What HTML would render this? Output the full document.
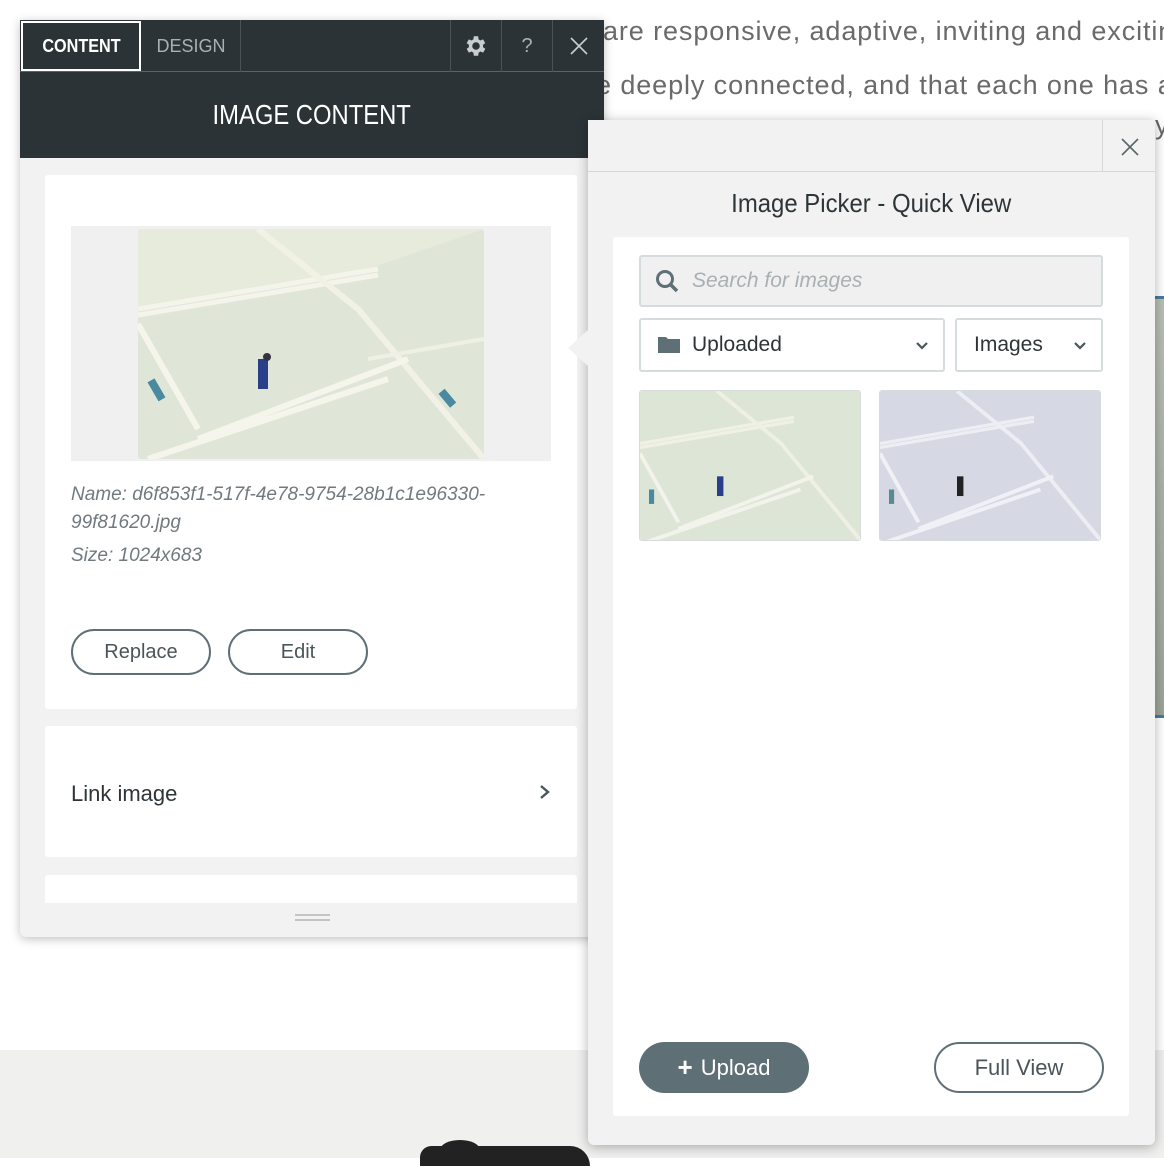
<!DOCTYPE html>
<html><head><meta charset="utf-8"><style>
*{box-sizing:border-box;margin:0;padding:0}
body{width:1164px;height:1158px;overflow:hidden;position:relative;background:#fff;font-family:"Liberation Sans",sans-serif}
.abs{position:absolute}
.bgtext{position:absolute;left:603px;font-size:27px;color:#6a6a6a;white-space:nowrap;letter-spacing:.9px}
.dark{background:#2c3337}
.tab{position:absolute;top:0;height:52px;display:flex;align-items:center;justify-content:center;font-size:18px;color:#fff;border-right:1px solid #4a5256}
.card{position:absolute;background:#fff;border-radius:3px}
.pill{position:absolute;border:2px solid #5f6f76;border-radius:24px;display:flex;align-items:center;justify-content:center;font-size:20px;color:#4a5559;background:#fff}
.img{position:absolute;overflow:hidden}
</style></head><body>
<div class="bgtext" style="top:16px">are responsive, adaptive, inviting and exciting</div>
<div class="bgtext" style="top:70px;left:596px">e deeply connected, and that each one has a</div>
<div class="abs" style="left:1155px;top:110px;font-size:27px;color:#6a6a6a">y</div>
<div class="abs" style="left:1155px;top:296px;width:9px;height:422px;background:linear-gradient(#b9bfb3,#9ca597);border-top:3px solid #4a7aa0;border-bottom:3px solid #4a7aa0"></div>
<div class="abs" style="left:0;top:1050px;width:1164px;height:108px;background:#f0f0ef"></div>
<div class="abs" style="left:420px;top:1146px;width:170px;height:20px;background:#222;border-radius:40px 70px 0 0"></div>
<div class="abs" style="left:440px;top:1140px;width:40px;height:20px;background:#222;border-radius:50% 50% 0 0"></div>

<!-- Left panel -->
<div class="abs" style="left:20px;top:20px;width:584px;height:917px;background:#f2f2f2;box-shadow:0 2px 10px rgba(0,0,0,.25);border-radius:0 0 6px 6px"></div>
<div class="abs dark" style="left:20px;top:20px;width:584px;height:52px;border-bottom:1px solid #59636a">
 <div class="tab" style="left:1px;top:1px;width:120px;height:50px;border:2px solid #fff;font-size:18px;font-weight:bold"><span style="display:inline-block;transform:scaleX(.9)">CONTENT</span></div>
 <div class="tab" style="left:122px;width:99px;color:#a9b0b4">DESIGN</div>
 <div class="tab" style="left:221px;width:210px"></div>
 <div class="tab" style="left:431px;width:51px">
  <svg width="26" height="26" viewBox="0 0 24 24"><path fill="#c9cdd0" d="M19.4 13a7.5 7.5 0 0 0 0-2l2.1-1.6-2-3.5-2.5 1a7 7 0 0 0-1.7-1L15 3h-4l-.4 2.9a7 7 0 0 0-1.7 1l-2.5-1-2 3.5L6.5 11a7.5 7.5 0 0 0 0 2l-2.1 1.6 2 3.5 2.5-1a7 7 0 0 0 1.7 1L11 21h4l.4-2.9a7 7 0 0 0 1.7-1l2.5 1 2-3.5zM13 15.5a3.5 3.5 0 1 1 0-7 3.5 3.5 0 0 1 0 7z" transform="translate(-1 0)"/></svg>
 </div>
 <div class="tab" style="left:482px;width:51px;color:#a9b0b4;font-size:20px">?</div>
 <div class="tab" style="left:533px;width:51px;border:none"><svg width="20" height="20"><path d="M2 2L18 18M18 2L2 18" stroke="#c9cdd0" stroke-width="1.6"/></svg></div>
</div>
<div class="abs dark" style="left:20px;top:72px;width:584px;height:86px;display:flex;align-items:center;justify-content:center;color:#fff;font-size:28px;transform-origin:center"><span style="display:inline-block;transform:scaleX(.85)">IMAGE CONTENT</span></div>

<div class="card" style="left:45px;top:175px;width:532px;height:534px">
 <div class="abs" style="left:26px;top:51px;width:480px;height:235px;background:#f0f0f0"></div>
 <div class="img" style="left:93px;top:54px;width:346px;height:230px;border-radius:3px">
  <svg width="346" height="230" viewBox="0 0 346 230"><rect width="346" height="230" fill="#dfe6d8"/>
  <path d="M0 80L230 40L346 0V0H0z" fill="#e6ebdc"/><path d="M0 80L240 40M0 86L240 46" stroke="#f4f4ea" stroke-width="5"/><path d="M120 0L220 80L346 230" stroke="#f1f1e6" stroke-width="6" fill="none"/><path d="M0 95L60 200M60 210L270 130M10 230L250 150" stroke="#f5f5ec" stroke-width="6"/><path d="M230 130L346 110" stroke="#eef0e4" stroke-width="4"/>
  <rect x="120" y="130" width="10" height="30" fill="#2a3f8a"/><circle cx="129" cy="128" r="4" fill="#334"/><rect x="14" y="150" width="8" height="22" fill="#4a8aa0" transform="rotate(-30 18 160)"/><rect x="306" y="160" width="8" height="18" fill="#4a8aa0" transform="rotate(-40 310 170)"/></svg>
 </div>
 <div class="abs" style="left:26px;top:306px;font-size:19px;font-style:italic;color:#707a7e;line-height:28px">Name: d6f853f1-517f-4e78-9754-28b1c1e96330-<br>99f81620.jpg</div>
 <div class="abs" style="left:26px;top:370px;font-size:19px;font-style:italic;color:#707a7e">Size: 1024x683</div>
 <div class="pill" style="left:26px;top:454px;width:140px;height:46px">Replace</div>
 <div class="pill" style="left:183px;top:454px;width:140px;height:46px">Edit</div>
</div>
<div class="card" style="left:45px;top:726px;width:532px;height:131px">
 <div class="abs" style="left:26px;top:55px;font-size:22px;color:#2e3538">Link image</div>
 <svg class="abs" style="left:493px;top:58px" width="14" height="16"><path d="M3 2L10 8L3 14" stroke="#4a5559" stroke-width="2.4" fill="none"/></svg>
</div>
<div class="card" style="left:45px;top:875px;width:532px;height:28px;border-radius:3px 3px 0 0"></div>
<div class="abs" style="left:295px;top:914px;width:35px;height:2px;background:#c4c4c4"></div>
<div class="abs" style="left:295px;top:919px;width:35px;height:2px;background:#c4c4c4"></div>

<!-- Right panel -->
<div class="abs" style="left:588px;top:120px;width:567px;height:1025px;background:#f2f2f2;box-shadow:0 2px 12px rgba(0,0,0,.3);border-radius:0 0 6px 6px"></div>
<div class="abs" style="left:568px;top:330px;width:0;height:0;border-top:18px solid transparent;border-bottom:18px solid transparent;border-right:20px solid #f2f2f2"></div>
<div class="abs" style="left:588px;top:171px;width:567px;height:1px;background:#d4d8da"></div>
<div class="abs" style="left:1102px;top:120px;width:1px;height:52px;background:#d4d8da"></div>
<svg class="abs" style="left:1120px;top:137px" width="20" height="20"><path d="M2 2L18 18M18 2L2 18" stroke="#5a666b" stroke-width="1.6"/></svg>
<div class="abs" style="left:588px;top:188px;width:567px;text-align:center;font-size:26px;color:#2e3538"><span style="display:inline-block;transform:scaleX(.92)">Image Picker - Quick View</span></div>
<div class="card" style="left:613px;top:237px;width:516px;height:879px">
 <div class="abs" style="left:26px;top:18px;width:464px;height:52px;background:#f0f0f0;border:2px solid #d6dcde;border-radius:3px">
  <svg class="abs" style="left:14px;top:12px" width="26" height="26"><circle cx="10" cy="10" r="7.5" stroke="#5f6f76" stroke-width="3" fill="none"/><path d="M15 15L22 22" stroke="#5f6f76" stroke-width="3.5"/></svg>
  <div class="abs" style="left:51px;top:12px;font-size:21px;font-style:italic;color:#a9b0b3">Search for images</div>
 </div>
 <div class="abs" style="left:26px;top:81px;width:306px;height:54px;border:2px solid #d6dcde;border-radius:3px;background:#fff">
  <svg class="abs" style="left:17px;top:15px" width="22" height="18"><path d="M0 2h8l2 2h12v14H0z" fill="#5f6f76"/></svg>
  <div class="abs" style="left:51px;top:13px;font-size:21px;color:#2e3538">Uploaded</div>
  <svg class="abs" style="left:274px;top:21px" width="14" height="10"><path d="M2 2L7 7L12 2" stroke="#4a5559" stroke-width="2.2" fill="none"/></svg>
 </div>
 <div class="abs" style="left:342px;top:81px;width:148px;height:54px;border:2px solid #d6dcde;border-radius:3px;background:#fff">
  <div class="abs" style="left:17px;top:13px;font-size:21px;color:#2e3538">Images</div>
  <svg class="abs" style="left:116px;top:21px" width="14" height="10"><path d="M2 2L7 7L12 2" stroke="#4a5559" stroke-width="2.2" fill="none"/></svg>
 </div>
 <div class="img" style="left:26px;top:153px;width:222px;height:151px;border:1px solid #d6dcde;border-radius:3px">
  <svg width="222" height="151" viewBox="0 0 346 230" preserveAspectRatio="none"><rect width="346" height="230" fill="#dde5d6"/><path d="M0 80L240 40M0 86L240 46" stroke="#eff1e4" stroke-width="5"/><path d="M120 0L220 80L346 230" stroke="#eef0e4" stroke-width="6" fill="none"/><path d="M0 95L60 200M60 210L270 130M10 230L250 150" stroke="#f2f3ea" stroke-width="6"/><rect x="120" y="130" width="10" height="30" fill="#2a3f8a"/><rect x="14" y="150" width="8" height="22" fill="#4a8aa0"/></svg>
 </div>
 <div class="img" style="left:266px;top:153px;width:222px;height:151px;border:1px solid #d6dcde;border-radius:3px">
  <svg width="222" height="151" viewBox="0 0 346 230" preserveAspectRatio="none"><rect width="346" height="230" fill="#d6d8e4"/><path d="M0 80L240 40M0 86L240 46" stroke="#eceef4" stroke-width="5"/><path d="M120 0L220 80L346 230" stroke="#eceef4" stroke-width="6" fill="none"/><path d="M0 95L60 200M60 210L270 130M10 230L250 150" stroke="#f0f1f6" stroke-width="6"/><rect x="120" y="130" width="10" height="30" fill="#222"/><rect x="14" y="150" width="8" height="22" fill="#5a8a90"/></svg>
 </div>
 <div class="abs" style="left:26px;top:805px;width:170px;height:51px;border-radius:26px;background:#5f6f76;color:#fff;font-size:22px;display:flex;align-items:center;justify-content:center"><b style="font-size:26px;margin-right:8px;font-weight:bold">+</b>Upload</div>
 <div class="pill" style="left:321px;top:805px;width:170px;height:51px;font-size:22px;border-radius:26px">Full View</div>
</div>
</body></html>
